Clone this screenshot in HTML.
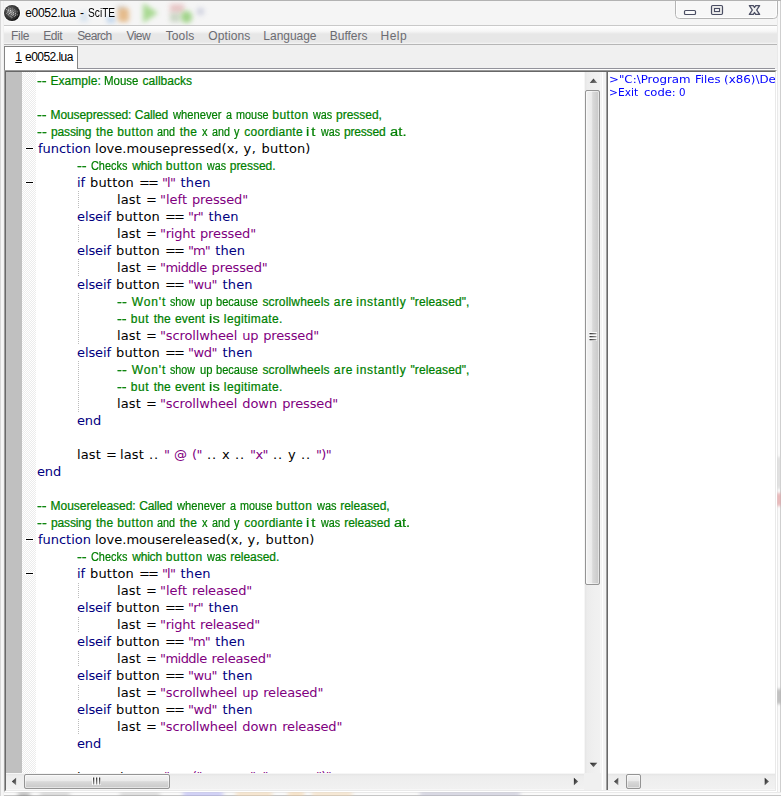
<!DOCTYPE html>
<html lang="en">
<head>
<meta charset="utf-8">
<title>e0052.lua - SciTE</title>
<style>
html,body{margin:0;padding:0;}
body{width:781px;height:796px;overflow:hidden;background:#f4f4f4;font-family:"Liberation Sans",sans-serif;font-size:12px;position:relative;}
#win{position:absolute;left:0;top:0;width:781px;height:796px;overflow:hidden;background:#f5f5f5;}
.abs{position:absolute;}
/* aero frame */
#glass{left:0;top:0;width:781px;height:796px;}
#blobs{left:0;top:0;width:781px;height:25px;overflow:hidden;}
#blobs i{position:absolute;display:block;filter:blur(2.5px);}
#bblobs{left:0;top:791px;width:781px;height:5px;overflow:hidden;}
#bblobs i{position:absolute;display:block;filter:blur(2px);}
#rblobs{left:777px;top:25px;width:4px;height:767px;overflow:hidden;}
#rblobs i{position:absolute;display:block;left:0;width:4px;filter:blur(1.5px);}
#edgeT{left:0;top:0;width:781px;height:1px;background:#b2b2b2;}
#edgeL{left:0;top:0;width:4px;height:796px;background:linear-gradient(90deg,#d8d8d8 0,#d8d8d8 1px,#f6f6f6 1px,#f6f6f6 3px,#f0f0f0 3px);}
#edgeR{left:777px;top:0;width:4px;height:796px;background:linear-gradient(90deg,#e9e9e9 0,#e9e9e9 1px,#fafafa 1px,#fafafa 3px,#cfcfcf 3px);}
#edgeB{left:0;top:792px;width:781px;height:4px;background:linear-gradient(180deg,#e9e9e9 0,#e9e9e9 1px,#fafafa 1px,#fafafa 3px,#c6c6c6 3px);}
/* title */
#icon{left:3px;top:4px;width:18px;height:18px;}
#title span{position:absolute;transform-origin:0 0;top:5px;height:16px;line-height:16px;font-size:12px;color:#000;white-space:pre;text-shadow:0 0 3px #fff,0 0 5px #fff;}
#ctl{left:675px;top:0;width:103px;height:20px;}
/* menu */
#menu{left:4px;top:25px;width:773px;height:20px;box-sizing:border-box;border-top:1px solid #c9c9c9;border-bottom:1px solid #b6b6b6;background:linear-gradient(180deg,#fefefe 0,#f7f7f7 5px,#ededed 7px,#e7e7e7 8px,#e7e7e7 16px,#eeeeee 17px,#f6f6f6 18px);}
#menu span{position:absolute;transform-origin:0 0;top:3px;height:15px;line-height:15px;color:#6c6c72;font-size:12px;white-space:pre;}
/* tab bar */
#tabbar{left:4px;top:45px;width:773px;height:25px;background:#f0f0f0;}
#tabline{left:77px;top:68px;width:698px;height:1px;background:#93939b;}
#tabwhite{left:5px;top:69px;width:772px;height:1px;background:#fdfdfd;}
#tab{left:4px;top:46px;width:74px;height:24px;box-sizing:border-box;background:#fff;border:1px solid #858585;border-bottom:none;border-right:none;}
#tabr{left:77px;top:46px;width:1px;height:23px;background:#858585;}
#tab span{position:absolute;transform-origin:0 0;top:3px;line-height:15px;height:15px;font-size:12px;color:#000;white-space:pre;}
/* editor pane */
#sunk{left:4px;top:70px;width:773px;height:722px;box-sizing:border-box;background:#fff;border:1px solid;border-color:#9a9a9a #ffffff #ffffff #a0a0a0;}
#sunk2{left:5px;top:71px;width:771px;height:720px;box-sizing:border-box;border:1px solid;border-color:#686868 #e9e9e9 #e9e9e9 #696969;}
#split{left:601px;top:72px;width:7px;height:718px;background:linear-gradient(90deg,#f4f4f4 0,#f4f4f4 1px,#ffffff 1px,#ffffff 2px,#f3f3f3 2px,#f3f3f3 5px,#a0a0a0 5px,#a0a0a0 6px,#696969 6px);}
#ed{left:6px;top:72px;width:578px;height:701px;background:#fff;overflow:hidden;}
#m1{left:0;top:0;width:16px;height:701px;background:#c0c0c0;}
#m2{left:16px;top:0;width:14px;height:701px;background-color:#fff;background-image:linear-gradient(45deg,#ececec 25%,transparent 25%,transparent 75%,#ececec 75%),linear-gradient(45deg,#ececec 25%,transparent 25%,transparent 75%,#ececec 75%);background-size:2px 2px;background-position:0 0,1px 1px;}
#code{left:0;top:0;width:578px;height:701px;}
.ln{position:absolute;left:0;width:578px;height:17px;white-space:pre;font-size:13px;line-height:17px;}
.w{position:absolute;top:0;height:17px;line-height:17px;white-space:pre;font-family:"DejaVu Sans","Liberation Sans",sans-serif;font-size:13px;color:#000;}
.c{font-family:"Liberation Sans","DejaVu Sans",sans-serif;font-size:12px;color:#007f00;transform-origin:0 0;margin-top:1px;-webkit-text-stroke:0.22px #007f00;}
.k{color:#00007f;}
.s{color:#7f007f;}
.fold{position:absolute;left:20px;width:7px;height:1px;background:#000;box-shadow:0 0 0 1px #fff;}
.guide{position:absolute;left:72px;width:1px;background:repeating-linear-gradient(180deg,#bcbcbc 0,#bcbcbc 1px,transparent 1px,transparent 2px);}
.guide.ev{background:repeating-linear-gradient(180deg,transparent 0,transparent 1px,#bcbcbc 1px,#bcbcbc 2px);}
/* scrollbars */
.sb{background:#f0f0f0;}
#vs{left:584px;top:72px;width:17px;height:701px;background:linear-gradient(90deg,#f6f6f6 0,#f6f6f6 1px,#e5e5e5 1px,#ececec 3px,#efefef 9px,#f1f1f1 16px,#f7f7f7 16px);}
#hs{left:6px;top:773px;width:578px;height:17px;background:linear-gradient(180deg,#f6f6f6 0,#f6f6f6 1px,#e5e5e5 1px,#ececec 3px,#efefef 9px,#f1f1f1 16px,#f7f7f7 16px);}
#corner{left:584px;top:773px;width:17px;height:17px;background:#f0f0f0;}
#out{left:608px;top:72px;width:167px;height:701px;background:#fff;overflow:hidden;}
.ol{position:absolute;left:0;width:167px;height:13px;white-space:pre;font-size:10.5px;line-height:13px;}
#out span{position:absolute;top:0;transform-origin:0 0;white-space:pre;font-family:"DejaVu Sans","Liberation Sans",sans-serif;font-size:10.5px;line-height:13px;height:13px;margin-top:1px;color:#0000ff;}
#ohs{left:608px;top:773px;width:167px;height:17px;background:linear-gradient(180deg,#f6f6f6 0,#f6f6f6 1px,#e5e5e5 1px,#ececec 3px,#efefef 9px,#f1f1f1 16px,#f7f7f7 16px);}
.thumbv{position:absolute;box-sizing:border-box;border:1px solid #949494;border-radius:2px;background:linear-gradient(90deg,#f3f3f3 0,#ebebeb 42%,#d9d9d9 52%,#c8c8c8 100%);box-shadow:inset 0 0 0 1px rgba(255,255,255,.5);}
.thumbh{position:absolute;box-sizing:border-box;border:1px solid #949494;border-radius:2px;background:linear-gradient(180deg,#f3f3f3 0,#ebebeb 42%,#d9d9d9 52%,#c8c8c8 100%);box-shadow:inset 0 0 0 1px rgba(255,255,255,.5);}
svg{display:block;}
</style>
</head>
<body>
<div id="win">
  <div id="glass" class="abs"></div>
  <div id="blobs" class="abs">
<i style="left:107px;top:15px;width:8px;height:8px;background:#9cc0e6;opacity:.6"></i>
<i style="left:117px;top:6px;width:8px;height:5px;background:#b8b8b8;opacity:.5"></i>
<i style="left:118px;top:8px;width:11px;height:14px;background:#e0a868;border-radius:3px;opacity:.75"></i>
<i style="left:143px;top:3px;width:0;height:0;border-left:15px solid #8fd071;border-top:10px solid transparent;border-bottom:10px solid transparent;opacity:.75"></i>
<i style="left:170px;top:4px;width:14px;height:9px;background:#e3b4b4;opacity:.7"></i>
<i style="left:170px;top:13px;width:10px;height:9px;background:#b9c9b0;opacity:.7"></i>
<i style="left:181px;top:11px;width:11px;height:12px;background:#8dcc70;border-radius:5px;opacity:.8"></i>
<i style="left:197px;top:8px;width:7px;height:7px;background:#b8bcd2;opacity:.6"></i>
<i style="left:80px;top:12px;width:8px;height:10px;background:#bcd3ea;opacity:.5"></i>
  </div>
  <div id="edgeR" class="abs"></div><div id="edgeB" class="abs"></div>
  <div id="bblobs" class="abs">
<i style="left:18px;top:2px;width:12px;height:4px;background:#6a6a6a;opacity:.6"></i>
<i style="left:40px;top:2px;width:30px;height:4px;background:#a8a8a8;opacity:.6"></i>
<i style="left:120px;top:2px;width:40px;height:4px;background:#999;opacity:.45"></i>
<i style="left:183px;top:1px;width:40px;height:4px;background:#a9a9f2;opacity:.8"></i>
<i style="left:236px;top:1px;width:36px;height:4px;background:#f2d2a6;opacity:.8"></i>
<i style="left:288px;top:1px;width:16px;height:4px;background:#f2c890;opacity:.7"></i>
<i style="left:312px;top:1px;width:40px;height:4px;background:#f2d2a6;opacity:.7"></i>
<i style="left:420px;top:1px;width:100px;height:4px;background:#b0b0c8;opacity:.7"></i>
  </div>
  <div id="rblobs" class="abs"><i style="top:432px;height:32px;background:#d4d4d4;opacity:.8"></i><i style="top:468px;height:13px;background:#e0989b;opacity:.8"></i><i style="top:664px;height:15px;background:#a9a9a9;opacity:.85"></i></div>
  <div id="edgeL" class="abs"></div>
<svg id="icon" class="abs" viewBox="0 0 18 18" width="18" height="18">
<defs><radialGradient id="ig" cx="0.4" cy="0.4" r="0.62"><stop offset="0" stop-color="#7a7a7a"/><stop offset="0.5" stop-color="#454545"/><stop offset="0.85" stop-color="#262626"/><stop offset="1" stop-color="#080808"/></radialGradient>
<clipPath id="ic"><circle cx="9" cy="9" r="7.2"/></clipPath></defs>
<circle cx="9" cy="9" r="8.9" fill="#ffffff" opacity="0.9"/>
<circle cx="9" cy="9" r="8" fill="url(#ig)"/>
<g clip-path="url(#ic)" stroke="#ffffff" stroke-width="1" fill="none" stroke-dasharray="1 1">
<path d="M5.5 3.5 L13.5 8.5" opacity="0.5"/><path d="M4.5 4.5 L13.5 10.5" opacity="0.85" stroke-dashoffset="1"/><path d="M3.5 5.5 L12.5 11.5" opacity="1"/><path d="M3.5 7.5 L11.5 12.5" opacity="0.9" stroke-dashoffset="1"/><path d="M3.5 9.5 L9.5 13.5" opacity="0.7"/><path d="M8.5 3.5 L15.5 8.5" opacity="0.35" stroke-dashoffset="1"/><path d="M12.5 9.5 L15.5 11.5" opacity="0.5"/><path d="M6.5 12.5 L9.5 14.5" opacity="0.35"/>
</g></svg>
  <div id="title" class="abs">
<span style="left:25.22px;letter-spacing:-0.290px">e0052.lua</span> <span style="left:80.03px;letter-spacing:0.000px">-</span> <span style="left:87.78px;transform:scaleX(0.8482)">SciTE</span>
  </div>
<svg id="ctl" class="abs" viewBox="0 0 103 20" width="103" height="20">
<path d="M0.5 0 V14.5 Q0.5 18.5 4.5 18.5 H98.5 Q102.5 18.5 102.5 14.5 V0" fill="#f7f7f7" stroke="#b4b4b4" stroke-width="1"/>
<path d="M1.5 0 V14.5 Q1.5 17.5 4.5 17.5 H98.5 Q101.5 17.5 101.5 14.5 V0" fill="none" stroke="#ffffff" stroke-width="1" opacity="0.7"/>
<rect x="9.5" y="10.5" width="11" height="4" rx="1" fill="#fafafa" stroke="#4b4e63" stroke-width="1.2"/>
<rect x="36.5" y="5.5" width="11" height="9" rx="1.2" fill="#ebebeb" stroke="#4b4e63" stroke-width="1.2"/>
<rect x="39.5" y="8.5" width="5" height="3" fill="#fafafa" stroke="#4b4e63" stroke-width="1.1"/>
<path d="M74.4 5.6 H78.3 L79.5 7.5 L80.7 5.6 H84.6 L81.7 10 L84.6 14.4 H80.7 L79.5 12.5 L78.3 14.4 H74.4 L77.3 10 Z" fill="#f1f1f1" stroke="#4b4e63" stroke-width="1.35" stroke-linejoin="round"/>
</svg>
  <div id="edgeT" class="abs"></div>
  <div id="menu" class="abs">
<span style="left:6.96px;letter-spacing:-0.271px">File</span>
<span style="left:39.16px;letter-spacing:-0.394px">Edit</span>
<span style="left:73.23px;letter-spacing:-0.615px">Search</span>
<span style="left:122.50px;letter-spacing:-0.546px">View</span>
<span style="left:161.71px;letter-spacing:0.112px">Tools</span>
<span style="left:204.34px;letter-spacing:0.114px">Options</span>
<span style="left:259.36px;letter-spacing:-0.038px">Language</span>
<span style="left:325.76px;letter-spacing:-0.014px">Buffers</span>
<span style="left:376.56px;letter-spacing:0.448px">Help</span>
  </div>
  <div id="tabbar" class="abs"></div>
  <div id="tabline" class="abs"></div>
  <div id="tabwhite" class="abs"></div>
  <div id="tab" class="abs">
<span style="left:10.28px;letter-spacing:0.000px"><u>1</u></span> <span style="left:20.12px;letter-spacing:-0.565px">e0052.lua</span>
  </div>
  <div id="tabr" class="abs"></div>
  <div id="sunk" class="abs"></div>
  <div id="sunk2" class="abs"></div>
  <div id="ed" class="abs">
    <div id="m1" class="abs"></div>
    <div id="m2" class="abs"></div>
<i class="fold" style="top:76px"></i>
<i class="fold" style="top:110px"></i>
<i class="fold" style="top:467px"></i>
<i class="fold" style="top:501px"></i>
<i class="guide" style="top:119px;height:17px"></i>
<i class="guide" style="top:153px;height:17px"></i>
<i class="guide" style="top:187px;height:17px"></i>
<i class="guide" style="top:221px;height:51px"></i>
<i class="guide" style="top:289px;height:51px"></i>
<i class="guide ev" style="top:510px;height:17px"></i>
<i class="guide ev" style="top:544px;height:17px"></i>
<i class="guide ev" style="top:578px;height:17px"></i>
<i class="guide ev" style="top:612px;height:17px"></i>
<i class="guide ev" style="top:646px;height:17px"></i>
    <div id="code" class="abs">
<div class="ln" style="top:0px"><span class="w c" style="left:31.24px;letter-spacing:-0.052px;transform:scaleX(1.220)">--</span> <span class="w c" style="left:44.56px;letter-spacing:0.029px">Example:</span> <span class="w c" style="left:97.90px;transform:scaleX(0.9568)">Mouse</span> <span class="w c" style="left:136.62px;letter-spacing:-0.000px">callbacks</span></div>
<div class="ln" style="top:34px"><span class="w c" style="left:31.24px;letter-spacing:-0.052px;transform:scaleX(1.220)">--</span> <span class="w c" style="left:44.56px;letter-spacing:-0.102px">Mousepressed:</span> <span class="w c" style="left:128.84px;letter-spacing:-0.117px">Called</span> <span class="w c" style="left:166.87px;transform:scaleX(0.9317)">whenever</span> <span class="w c" style="left:220.06px;transform:scaleX(0.9000)">a</span> <span class="w c" style="left:229.72px;transform:scaleX(0.9057)">mouse</span> <span class="w c" style="left:266.25px;letter-spacing:0.512px">button</span> <span class="w c" style="left:306.77px;transform:scaleX(0.9030)">was</span> <span class="w c" style="left:330.05px;letter-spacing:-0.026px">pressed,</span></div>
<div class="ln" style="top:51px"><span class="w c" style="left:31.24px;letter-spacing:0.193px;transform:scaleX(1.220)">--</span> <span class="w c" style="left:45.05px;letter-spacing:-0.156px">passing</span> <span class="w c" style="left:89.90px;letter-spacing:0.352px">the</span> <span class="w c" style="left:111.15px;letter-spacing:0.532px">button</span> <span class="w c" style="left:151.26px;transform:scaleX(0.9013)">and</span> <span class="w c" style="left:173.80px;letter-spacing:0.202px">the</span> <span class="w c" style="left:195.50px;transform:scaleX(0.9167)">x</span> <span class="w c" style="left:205.76px;transform:scaleX(0.8960)">and</span> <span class="w c" style="left:228.20px;transform:scaleX(0.9000)">y</span> <span class="w c" style="left:238.32px;letter-spacing:0.247px">coordiante</span> <span class="w c" style="left:300.28px;letter-spacing:1.676px;transform:scaleX(1.220)">it</span> <span class="w c" style="left:314.97px;transform:scaleX(0.8935)">was</span> <span class="w c" style="left:338.05px;letter-spacing:-0.195px">pressed</span> <span class="w c" style="left:383.54px;letter-spacing:0.124px;transform:scaleX(1.220)">at.</span></div>
<div class="ln" style="top:68px"><span class="w k" style="left:31.90px;letter-spacing:-0.013px">function</span> <span class="w n" style="left:89.00px;letter-spacing:0.029px">love.mousepressed(x,</span> <span class="w n" style="left:237.60px;letter-spacing:0.587px">y,</span> <span class="w n" style="left:255.60px;letter-spacing:0.150px">button)</span></div>
<div class="ln" style="top:85px"><span class="w c" style="left:71.24px;letter-spacing:-0.052px;transform:scaleX(1.220)">--</span> <span class="w c" style="left:84.99px;transform:scaleX(0.9085)">Checks</span> <span class="w c" style="left:126.29px;letter-spacing:-0.223px">which</span> <span class="w c" style="left:159.75px;letter-spacing:0.612px">button</span> <span class="w c" style="left:200.77px;transform:scaleX(0.8888)">was</span> <span class="w c" style="left:223.75px;letter-spacing:-0.027px">pressed.</span></div>
<div class="ln" style="top:102px"><span class="w k" style="left:71.00px;letter-spacing:-0.094px">if</span> <span class="w n" style="left:84.00px;letter-spacing:0.187px">button</span> <span class="w n" style="left:133.00px;letter-spacing:-1.893px">==</span> <span class="w s" style="left:156.00px;letter-spacing:-0.857px">"l"</span> <span class="w k" style="left:174.60px;letter-spacing:0.107px">then</span></div>
<div class="ln" style="top:119px"><span class="w n" style="left:111.00px;letter-spacing:0.138px">last</span> <span class="w n" style="left:140.00px;letter-spacing:-1.893px">=</span> <span class="w s" style="left:154.00px;letter-spacing:-0.007px">"left</span> <span class="w s" style="left:186.00px;letter-spacing:-0.136px">pressed"</span></div>
<div class="ln" style="top:136px"><span class="w k" style="left:71.00px;letter-spacing:-0.095px">elseif</span> <span class="w n" style="left:110.00px;letter-spacing:0.187px">button</span> <span class="w n" style="left:159.00px;letter-spacing:-1.893px">==</span> <span class="w s" style="left:182.00px;letter-spacing:-0.768px">"r"</span> <span class="w k" style="left:202.60px;letter-spacing:0.107px">then</span></div>
<div class="ln" style="top:153px"><span class="w n" style="left:111.00px;letter-spacing:0.138px">last</span> <span class="w n" style="left:140.00px;letter-spacing:-1.893px">=</span> <span class="w s" style="left:154.00px;letter-spacing:-0.254px">"right</span> <span class="w s" style="left:194.00px;letter-spacing:-0.136px">pressed"</span></div>
<div class="ln" style="top:170px"><span class="w k" style="left:71.00px;letter-spacing:-0.095px">elseif</span> <span class="w n" style="left:110.00px;letter-spacing:0.187px">button</span> <span class="w n" style="left:159.00px;letter-spacing:-1.893px">==</span> <span class="w s" style="left:182.00px;letter-spacing:-1.008px">"m"</span> <span class="w k" style="left:209.20px;letter-spacing:0.107px">then</span></div>
<div class="ln" style="top:187px"><span class="w n" style="left:111.00px;letter-spacing:0.138px">last</span> <span class="w n" style="left:140.00px;letter-spacing:-1.893px">=</span> <span class="w s" style="left:154.00px;letter-spacing:-0.538px">"middle</span> <span class="w s" style="left:205.60px;letter-spacing:-0.136px">pressed"</span></div>
<div class="ln" style="top:204px"><span class="w k" style="left:71.00px;letter-spacing:-0.095px">elseif</span> <span class="w n" style="left:110.00px;letter-spacing:0.187px">button</span> <span class="w n" style="left:159.00px;letter-spacing:-1.893px">==</span> <span class="w s" style="left:182.00px;letter-spacing:-0.458px">"wu"</span> <span class="w k" style="left:216.60px;letter-spacing:0.107px">then</span></div>
<div class="ln" style="top:221px"><span class="w c" style="left:111.24px;letter-spacing:0.193px;transform:scaleX(1.220)">--</span> <span class="w c" style="left:125.80px;letter-spacing:0.869px">Won't</span> <span class="w c" style="left:164.33px;transform:scaleX(0.8866)">show</span> <span class="w c" style="left:193.70px;transform:scaleX(0.9330)">up</span> <span class="w c" style="left:210.11px;transform:scaleX(0.9222)">because</span> <span class="w c" style="left:256.41px;letter-spacing:0.155px">scrollwheels</span> <span class="w c" style="left:327.82px;letter-spacing:0.659px">are</span> <span class="w c" style="left:350.35px;letter-spacing:0.666px">instantly</span> <span class="w c" style="left:404.43px;letter-spacing:0.109px">"released",</span></div>
<div class="ln" style="top:238px"><span class="w c" style="left:111.24px;letter-spacing:-0.052px;transform:scaleX(1.220)">--</span> <span class="w c" style="left:124.75px;letter-spacing:0.614px">but</span> <span class="w c" style="left:147.80px;letter-spacing:0.152px">the</span> <span class="w c" style="left:169.02px;letter-spacing:0.145px">event</span> <span class="w c" style="left:203.19px;letter-spacing:0.164px;transform:scaleX(1.220)">is</span> <span class="w c" style="left:217.85px;letter-spacing:0.374px">legitimate.</span></div>
<div class="ln" style="top:255px"><span class="w n" style="left:111.00px;letter-spacing:0.138px">last</span> <span class="w n" style="left:140.00px;letter-spacing:-1.893px">=</span> <span class="w s" style="left:154.00px;letter-spacing:-0.118px">"scrollwheel</span> <span class="w s" style="left:236.20px;letter-spacing:-0.246px">up</span> <span class="w s" style="left:257.20px;letter-spacing:-0.136px">pressed"</span></div>
<div class="ln" style="top:272px"><span class="w k" style="left:71.00px;letter-spacing:-0.095px">elseif</span> <span class="w n" style="left:110.00px;letter-spacing:0.187px">button</span> <span class="w n" style="left:159.00px;letter-spacing:-1.893px">==</span> <span class="w s" style="left:182.00px;letter-spacing:-0.461px">"wd"</span> <span class="w k" style="left:216.60px;letter-spacing:0.107px">then</span></div>
<div class="ln" style="top:289px"><span class="w c" style="left:111.24px;letter-spacing:0.193px;transform:scaleX(1.220)">--</span> <span class="w c" style="left:125.80px;letter-spacing:0.869px">Won't</span> <span class="w c" style="left:164.33px;transform:scaleX(0.8866)">show</span> <span class="w c" style="left:193.70px;transform:scaleX(0.9330)">up</span> <span class="w c" style="left:210.11px;transform:scaleX(0.9222)">because</span> <span class="w c" style="left:256.41px;letter-spacing:0.155px">scrollwheels</span> <span class="w c" style="left:327.82px;letter-spacing:0.659px">are</span> <span class="w c" style="left:350.35px;letter-spacing:0.666px">instantly</span> <span class="w c" style="left:404.43px;letter-spacing:0.109px">"released",</span></div>
<div class="ln" style="top:306px"><span class="w c" style="left:111.24px;letter-spacing:-0.052px;transform:scaleX(1.220)">--</span> <span class="w c" style="left:124.75px;letter-spacing:0.614px">but</span> <span class="w c" style="left:147.80px;letter-spacing:0.152px">the</span> <span class="w c" style="left:169.02px;letter-spacing:0.145px">event</span> <span class="w c" style="left:203.19px;letter-spacing:0.164px;transform:scaleX(1.220)">is</span> <span class="w c" style="left:217.85px;letter-spacing:0.374px">legitimate.</span></div>
<div class="ln" style="top:323px"><span class="w n" style="left:111.00px;letter-spacing:0.138px">last</span> <span class="w n" style="left:140.00px;letter-spacing:-1.893px">=</span> <span class="w s" style="left:154.00px;letter-spacing:-0.118px">"scrollwheel</span> <span class="w s" style="left:236.20px;letter-spacing:-0.019px">down</span> <span class="w s" style="left:276.20px;letter-spacing:-0.136px">pressed"</span></div>
<div class="ln" style="top:340px"><span class="w k" style="left:71.00px;letter-spacing:-0.163px">end</span></div>
<div class="ln" style="top:374px"><span class="w n" style="left:71.00px;letter-spacing:0.138px">last</span> <span class="w n" style="left:100.00px;letter-spacing:-1.893px">=</span> <span class="w n" style="left:114.00px;letter-spacing:0.138px">last</span> <span class="w n" style="left:143.00px;letter-spacing:0.868px">..</span> <span class="w s" style="left:158.00px;letter-spacing:-0.979px">"</span> <span class="w s" style="left:168.00px;letter-spacing:0.000px">@</span> <span class="w s" style="left:186.00px;letter-spacing:-0.526px">("</span> <span class="w n" style="left:201.00px;letter-spacing:0.868px">..</span> <span class="w n" style="left:216.00px;letter-spacing:0.307px">x</span> <span class="w n" style="left:229.00px;letter-spacing:0.868px">..</span> <span class="w s" style="left:244.00px;letter-spacing:-0.551px">"x"</span> <span class="w n" style="left:267.00px;letter-spacing:0.868px">..</span> <span class="w n" style="left:282.00px;letter-spacing:0.307px">y</span> <span class="w n" style="left:295.00px;letter-spacing:0.868px">..</span> <span class="w s" style="left:310.00px;letter-spacing:-0.677px">")"</span></div>
<div class="ln" style="top:391px"><span class="w k" style="left:31.00px;letter-spacing:-0.163px">end</span></div>
<div class="ln" style="top:425px"><span class="w c" style="left:31.24px;letter-spacing:-0.052px;transform:scaleX(1.220)">--</span> <span class="w c" style="left:44.56px;letter-spacing:-0.020px">Mousereleased:</span> <span class="w c" style="left:133.14px;letter-spacing:-0.157px">Called</span> <span class="w c" style="left:170.97px;transform:scaleX(0.9298)">whenever</span> <span class="w c" style="left:224.06px;transform:scaleX(0.9000)">a</span> <span class="w c" style="left:233.73px;transform:scaleX(0.8999)">mouse</span> <span class="w c" style="left:270.05px;letter-spacing:0.512px">button</span> <span class="w c" style="left:310.57px;transform:scaleX(0.9172)">was</span> <span class="w c" style="left:334.15px;letter-spacing:0.023px">released,</span></div>
<div class="ln" style="top:442px"><span class="w c" style="left:31.24px;letter-spacing:0.193px;transform:scaleX(1.220)">--</span> <span class="w c" style="left:45.05px;letter-spacing:-0.156px">passing</span> <span class="w c" style="left:89.90px;letter-spacing:0.352px">the</span> <span class="w c" style="left:111.15px;letter-spacing:0.532px">button</span> <span class="w c" style="left:151.26px;transform:scaleX(0.9013)">and</span> <span class="w c" style="left:173.80px;letter-spacing:0.202px">the</span> <span class="w c" style="left:195.50px;transform:scaleX(0.9167)">x</span> <span class="w c" style="left:205.76px;transform:scaleX(0.8960)">and</span> <span class="w c" style="left:228.20px;transform:scaleX(0.9000)">y</span> <span class="w c" style="left:238.32px;letter-spacing:0.247px">coordiante</span> <span class="w c" style="left:300.28px;letter-spacing:1.676px;transform:scaleX(1.220)">it</span> <span class="w c" style="left:314.97px;transform:scaleX(0.8982)">was</span> <span class="w c" style="left:338.15px;letter-spacing:-0.001px">released</span> <span class="w c" style="left:388.14px;letter-spacing:-0.081px;transform:scaleX(1.220)">at.</span></div>
<div class="ln" style="top:459px"><span class="w k" style="left:31.90px;letter-spacing:-0.013px">function</span> <span class="w n" style="left:89.00px;letter-spacing:0.001px">love.mousereleased(x,</span> <span class="w n" style="left:241.60px;letter-spacing:0.587px">y,</span> <span class="w n" style="left:259.60px;letter-spacing:0.150px">button)</span></div>
<div class="ln" style="top:476px"><span class="w c" style="left:71.24px;letter-spacing:-0.052px;transform:scaleX(1.220)">--</span> <span class="w c" style="left:84.99px;transform:scaleX(0.9085)">Checks</span> <span class="w c" style="left:126.29px;letter-spacing:-0.223px">which</span> <span class="w c" style="left:159.75px;letter-spacing:0.612px">button</span> <span class="w c" style="left:200.77px;transform:scaleX(0.9124)">was</span> <span class="w c" style="left:224.25px;letter-spacing:-0.041px">released.</span></div>
<div class="ln" style="top:493px"><span class="w k" style="left:71.00px;letter-spacing:-0.094px">if</span> <span class="w n" style="left:84.00px;letter-spacing:0.187px">button</span> <span class="w n" style="left:133.00px;letter-spacing:-1.893px">==</span> <span class="w s" style="left:156.00px;letter-spacing:-0.857px">"l"</span> <span class="w k" style="left:174.60px;letter-spacing:0.107px">then</span></div>
<div class="ln" style="top:510px"><span class="w n" style="left:111.00px;letter-spacing:0.138px">last</span> <span class="w n" style="left:140.00px;letter-spacing:-1.893px">=</span> <span class="w s" style="left:154.00px;letter-spacing:-0.007px">"left</span> <span class="w s" style="left:186.00px;letter-spacing:-0.182px">released"</span></div>
<div class="ln" style="top:527px"><span class="w k" style="left:71.00px;letter-spacing:-0.095px">elseif</span> <span class="w n" style="left:110.00px;letter-spacing:0.187px">button</span> <span class="w n" style="left:159.00px;letter-spacing:-1.893px">==</span> <span class="w s" style="left:182.00px;letter-spacing:-0.768px">"r"</span> <span class="w k" style="left:202.60px;letter-spacing:0.107px">then</span></div>
<div class="ln" style="top:544px"><span class="w n" style="left:111.00px;letter-spacing:0.138px">last</span> <span class="w n" style="left:140.00px;letter-spacing:-1.893px">=</span> <span class="w s" style="left:154.00px;letter-spacing:-0.254px">"right</span> <span class="w s" style="left:194.00px;letter-spacing:-0.182px">released"</span></div>
<div class="ln" style="top:561px"><span class="w k" style="left:71.00px;letter-spacing:-0.095px">elseif</span> <span class="w n" style="left:110.00px;letter-spacing:0.187px">button</span> <span class="w n" style="left:159.00px;letter-spacing:-1.893px">==</span> <span class="w s" style="left:182.00px;letter-spacing:-1.008px">"m"</span> <span class="w k" style="left:209.20px;letter-spacing:0.107px">then</span></div>
<div class="ln" style="top:578px"><span class="w n" style="left:111.00px;letter-spacing:0.138px">last</span> <span class="w n" style="left:140.00px;letter-spacing:-1.893px">=</span> <span class="w s" style="left:154.00px;letter-spacing:-0.538px">"middle</span> <span class="w s" style="left:205.60px;letter-spacing:-0.182px">released"</span></div>
<div class="ln" style="top:595px"><span class="w k" style="left:71.00px;letter-spacing:-0.095px">elseif</span> <span class="w n" style="left:110.00px;letter-spacing:0.187px">button</span> <span class="w n" style="left:159.00px;letter-spacing:-1.893px">==</span> <span class="w s" style="left:182.00px;letter-spacing:-0.458px">"wu"</span> <span class="w k" style="left:216.60px;letter-spacing:0.107px">then</span></div>
<div class="ln" style="top:612px"><span class="w n" style="left:111.00px;letter-spacing:0.138px">last</span> <span class="w n" style="left:140.00px;letter-spacing:-1.893px">=</span> <span class="w s" style="left:154.00px;letter-spacing:-0.118px">"scrollwheel</span> <span class="w s" style="left:236.20px;letter-spacing:-0.246px">up</span> <span class="w s" style="left:257.20px;letter-spacing:-0.182px">released"</span></div>
<div class="ln" style="top:629px"><span class="w k" style="left:71.00px;letter-spacing:-0.095px">elseif</span> <span class="w n" style="left:110.00px;letter-spacing:0.187px">button</span> <span class="w n" style="left:159.00px;letter-spacing:-1.893px">==</span> <span class="w s" style="left:182.00px;letter-spacing:-0.461px">"wd"</span> <span class="w k" style="left:216.60px;letter-spacing:0.107px">then</span></div>
<div class="ln" style="top:646px"><span class="w n" style="left:111.00px;letter-spacing:0.138px">last</span> <span class="w n" style="left:140.00px;letter-spacing:-1.893px">=</span> <span class="w s" style="left:154.00px;letter-spacing:-0.118px">"scrollwheel</span> <span class="w s" style="left:236.20px;letter-spacing:-0.019px">down</span> <span class="w s" style="left:276.20px;letter-spacing:-0.182px">released"</span></div>
<div class="ln" style="top:663px"><span class="w k" style="left:71.00px;letter-spacing:-0.163px">end</span></div>
<div class="ln" style="top:697px"><span class="w n" style="left:71.00px;letter-spacing:0.138px">last</span> <span class="w n" style="left:100.00px;letter-spacing:-1.893px">=</span> <span class="w n" style="left:114.00px;letter-spacing:0.138px">last</span> <span class="w n" style="left:143.00px;letter-spacing:0.868px">..</span> <span class="w s" style="left:158.00px;top:-1px;letter-spacing:-0.979px">"</span> <span class="w s" style="left:168.00px;letter-spacing:0.000px">@</span> <span class="w s" style="left:186.00px;top:-1px;letter-spacing:-0.526px">("</span> <span class="w n" style="left:201.00px;letter-spacing:0.868px">..</span> <span class="w n" style="left:216.00px;letter-spacing:0.307px">x</span> <span class="w n" style="left:229.00px;letter-spacing:0.868px">..</span> <span class="w s" style="left:244.00px;top:-1px;letter-spacing:-0.551px">"x"</span> <span class="w n" style="left:267.00px;letter-spacing:0.868px">..</span> <span class="w n" style="left:282.00px;letter-spacing:0.307px">y</span> <span class="w n" style="left:295.00px;letter-spacing:0.868px">..</span> <span class="w s" style="left:310.00px;top:-1px;letter-spacing:-0.677px">")"</span></div>
    </div>
  </div>
  <div id="vs" class="abs">
<svg class="abs" style="left:0;top:0" width="17" height="701" viewBox="0 0 17 701"><defs><linearGradient id="ag" x1="0" y1="0" x2="1" y2="1"><stop offset="0" stop-color="#1a1a1a"/><stop offset="1" stop-color="#8a8a8a"/></linearGradient></defs><polygon points="5.7,10.9 9.5,6.4 13.3,10.9" fill="url(#ag)"/><polygon points="5.7,690.7 9.5,695.2 13.3,690.7" fill="url(#ag)"/></svg><div class="thumbv" style="left:1px;top:18px;width:15px;height:495px"></div><svg class="abs" style="left:5px;top:260px" width="9" height="9" viewBox="0 0 9 9"><defs><linearGradient id="gv" x1="0" y1="0" x2="1" y2="0"><stop offset="0" stop-color="#2e2e2e"/><stop offset="1" stop-color="#9a9a9a"/></linearGradient></defs><g fill="#fff" opacity=".85"><rect x="0" y="0" width="8" height="9"/></g><g fill="url(#gv)"><rect x="0.5" y="1" width="7" height="1.3"/><rect x="0.5" y="4" width="7" height="1.3"/><rect x="0.5" y="7" width="7" height="1.3"/></g></svg>
  </div>
  <div id="hs" class="abs">
<svg class="abs" style="left:0;top:0" width="578" height="17" viewBox="0 0 578 17"><defs><linearGradient id="ag2" x1="0" y1="0" x2="1" y2="1"><stop offset="0" stop-color="#1a1a1a"/><stop offset="1" stop-color="#8a8a8a"/></linearGradient></defs><polygon points="10.1,4.8 5.8,8.5 10.1,12.2" fill="url(#ag2)"/><polygon points="567.9,4.8 572.2,8.5 567.9,12.2" fill="url(#ag2)"/></svg><div class="thumbh" style="left:18px;top:1px;width:146px;height:15px"></div><svg class="abs" style="left:86px;top:4px" width="9" height="9" viewBox="0 0 9 9"><defs><linearGradient id="gh" x1="0" y1="0" x2="0" y2="1"><stop offset="0" stop-color="#2e2e2e"/><stop offset="1" stop-color="#9a9a9a"/></linearGradient></defs><g fill="#fff" opacity=".85"><rect x="0" y="0" width="9" height="8"/></g><g fill="url(#gh)"><rect x="1" y="0.5" width="1.3" height="7"/><rect x="4" y="0.5" width="1.3" height="7"/><rect x="7" y="0.5" width="1.3" height="7"/></g></svg>
  </div>
  <div id="corner" class="abs"></div>
  <div id="split" class="abs"></div>
  <div id="out" class="abs">
<div class="ol" style="top:0"><span style="left:1.19px;transform:scaleX(1.1281)">&gt;"C:\Program</span> <span style="left:86.61px;transform:scaleX(1.1074)">Files</span> <span style="left:115.97px;transform:scaleX(1.1309)">(x86)\De</span></div>
<div class="ol" style="top:13px"><span style="left:1.30px;transform:scaleX(1.0176)">&gt;Exit</span> <span style="left:35.66px;transform:scaleX(1.0993)">code:</span> <span style="left:71.36px;transform:scaleX(0.9789)">0</span></div>
  </div>
  <div id="ohs" class="abs">
<svg class="abs" style="left:0;top:0" width="167" height="17" viewBox="0 0 167 17"><defs><linearGradient id="ag3" x1="0" y1="0" x2="1" y2="1"><stop offset="0" stop-color="#1a1a1a"/><stop offset="1" stop-color="#8a8a8a"/></linearGradient></defs><polygon points="10.3,4.8 6.0,8.5 10.3,12.2" fill="url(#ag3)"/><polygon points="156.7,4.8 161.0,8.5 156.7,12.2" fill="url(#ag3)"/></svg><div class="thumbh" style="left:18px;top:1px;width:15px;height:15px"></div>
  </div>
</div>
</body>
</html>
